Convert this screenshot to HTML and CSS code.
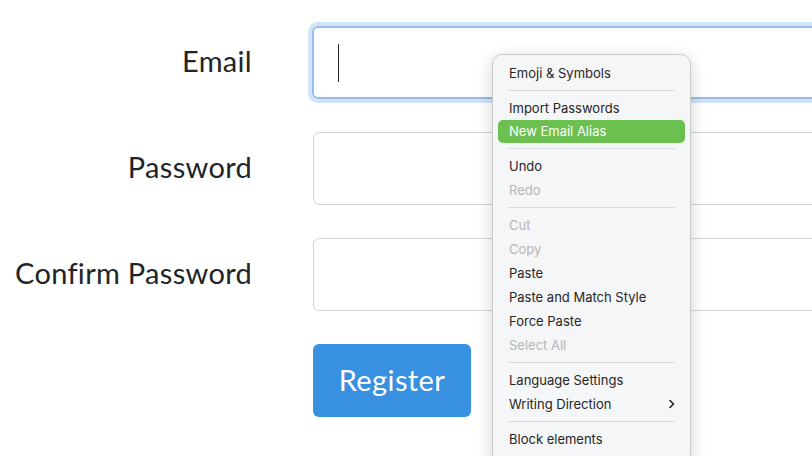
FILE: index.html
```html
<!DOCTYPE html>
<html lang="en">
<head>
    <meta charset="UTF-8">
    <meta name="viewport" content="width=device-width, initial-scale=1.0">
    <title>Register</title>
    <link rel="stylesheet" href="styles.css">
</head>
<body>
    <form class="register-form">
        <div class="form-row">
            <label>Email</label>
            <div class="field focused"><span class="caret"></span></div>
        </div>
        <div class="form-row">
            <label>Password</label>
            <div class="field"></div>
        </div>
        <div class="form-row">
            <label>Confirm Password</label>
            <div class="field"></div>
        </div>
        <div class="form-row">
            <label></label>
            <button type="button" class="register-btn">Register</button>
        </div>
    </form>

    <div class="context-menu">
        <div class="menu-item">Emoji &amp; Symbols</div>
        <div class="menu-sep"></div>
        <div class="menu-item">Import Passwords</div>
        <div class="menu-item active">New Email Alias</div>
        <div class="menu-sep"></div>
        <div class="menu-item">Undo</div>
        <div class="menu-item disabled">Redo</div>
        <div class="menu-sep"></div>
        <div class="menu-item disabled">Cut</div>
        <div class="menu-item disabled">Copy</div>
        <div class="menu-item">Paste</div>
        <div class="menu-item">Paste and Match Style</div>
        <div class="menu-item">Force Paste</div>
        <div class="menu-item disabled">Select All</div>
        <div class="menu-sep"></div>
        <div class="menu-item">Language Settings</div>
        <div class="menu-item">Writing Direction
            <svg class="chevron" width="8" height="10" viewBox="0 0 8 10">
                <path d="M2 1.5 L5.5 5 L2 8.5" fill="none" stroke="#222" stroke-width="1.6" stroke-linecap="round" stroke-linejoin="round"/>
            </svg>
        </div>
        <div class="menu-sep"></div>
        <div class="menu-item">Block elements</div>
    </div>
</body>
</html>
```
FILE: styles.css
```css
html, body {
    margin: 0;
    height: 100%;
    overflow: hidden;
}

body {
    background: white;
    font-family: Lato, "Open Sans", sans-serif;
    color: #212529;
    position: relative;
}

.register-form {
    padding-top: 26px;
}

.form-row {
    display: flex;
    align-items: center;
    margin-bottom: 33px;
}

.form-row label {
    width: 252px;
    margin-right: 61px;
    padding-bottom: 4px;
    text-align: right;
    font-size: 29px;
    letter-spacing: 0.3px;
    flex-shrink: 0;
}

.field {
    width: 560px;
    height: 71px;
    border: 1px solid #ced4da;
    border-radius: 6px;
    flex-shrink: 0;
    display: flex;
    align-items: center;
    box-sizing: content-box;
}

.field.focused {
    border: 2px solid #94bdea;
    height: 69px;
    margin-left: -1px;
    box-shadow: 0 0 0 4px #d0e3f7;
}

.caret {
    display: block;
    width: 1px;
    height: 38px;
    background: #222;
    margin-left: 24px;
}

.register-btn {
    width: 158px;
    height: 73px;
    border: none;
    border-radius: 6px;
    background-color: #3790e0;
    color: white;
    font-family: Lato, "Open Sans", sans-serif;
    font-size: 29px;
    letter-spacing: 0.4px;
    padding: 0 0 3px;
    cursor: pointer;
}

.context-menu {
    position: absolute;
    left: 492px;
    top: 54px;
    width: 187px;
    padding: 6px 5px 12px;
    background: #f5f6f7;
    border: 1px solid #c9cacc;
    border-radius: 10px;
    box-shadow: 0 4px 16px rgba(0, 0, 0, 0.18);
    font-family: Inter, "Liberation Sans", sans-serif;
    font-size: 13px;
    color: #262626;
}

.menu-item {
    height: 24px;
    line-height: 24px;
    padding: 0 9px 0 11px;
    border-radius: 5px;
    display: flex;
    justify-content: space-between;
    align-items: center;
}

.menu-item.active {
    background-color: #6cc04f;
    color: white;
    height: 23px;
    line-height: 23px;
    margin-bottom: 1px;
}

.menu-item.disabled {
    color: #b4b5b7;
}

.menu-sep {
    height: 1px;
    background: #d8d9db;
    margin: 5px 10px;
}
```
